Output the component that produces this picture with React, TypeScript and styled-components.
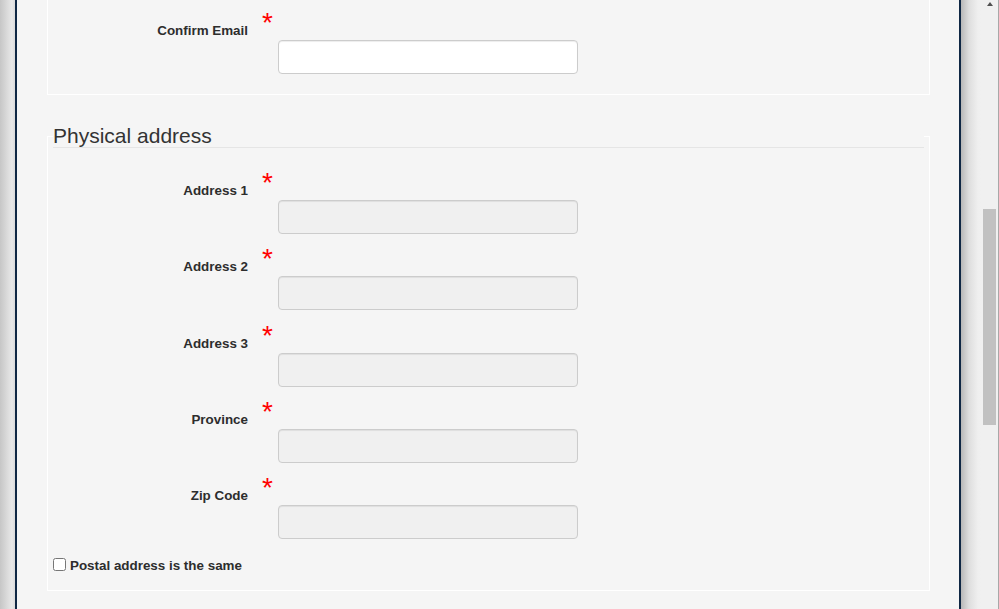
import React from "react";
import styled, { createGlobalStyle } from "styled-components";

const GlobalStyle = createGlobalStyle`
  html, body {
    margin: 0;
    padding: 0;
    height: 100%;
    overflow: hidden;
    background: #f0f0f0;
  }
  body {
    font-family: "Liberation Sans", Arial, Helvetica, sans-serif;
  }
`;

const Window = styled.div`
  display: flex;
  width: 999px;
  height: 609px;
  overflow: hidden;
`;

const ShadowLeft = styled.div`
  flex: 0 0 15px;
  background: linear-gradient(to right, #c6c6c6, #e8e8e8 80%, #dadada);
`;

const ShadowRight = styled.div`
  flex: 0 0 20px;
  background: linear-gradient(to right, #b8b8b8, #dedede 40%, #efefef 85%, #f0f0f0);
`;

const Edge = styled.div`
  flex: 0 0 2px;
  background: #0f2744;
`;

const Page = styled.main`
  flex: 0 0 942px;
  box-sizing: border-box;
  background: #f5f5f5;
  padding: 0 29px 0 30px;
  overflow: hidden;
`;

const Section = styled.fieldset<{ $cut?: boolean; $gap?: number }>`
  margin: ${(p) => (p.$gap ? `${p.$gap}px` : "0")} 0 0 0;
  min-width: 0;
  border: 1px solid #ffffff;
  border-top: ${(p) => (p.$cut ? "none" : "1px solid #ffffff")};
  padding: ${(p) => (p.$cut ? "9px 5px 8.75px" : "0 5px 15px")};
`;

const Legend = styled.legend`
  display: block;
  box-sizing: border-box;
  width: 100%;
  padding: 0;
  margin: 0 0 21px;
  font-size: 21px;
  line-height: 22px;
  color: #333333;
  border-bottom: 1px solid #e5e5e5;
`;

const Row = styled.div`
  display: grid;
  grid-template-columns: 195px 30px 300px;
  grid-template-rows: 31px 34px;
  margin-bottom: 11.25px;
`;

const Label = styled.label`
  grid-column: 1;
  grid-row: 1;
  text-align: right;
  padding-top: 12px;
  font-size: 13.4px;
  line-height: 19px;
  font-weight: 700;
  color: #2d2d2d;
`;

const Asterisk = styled.span`
  grid-column: 2;
  grid-row: 1;
  padding-left: 14px;
  color: #ff0000;
  font-size: 28px;
  line-height: 28px;
`;

const Input = styled.input<{ $locked?: boolean }>`
  grid-column: 3;
  grid-row: 2;
  box-sizing: border-box;
  width: 300px;
  height: 34px;
  margin: 0;
  padding: 6px 12px;
  font-family: inherit;
  font-size: 14px;
  color: #555555;
  background: ${(p) => (p.$locked ? "#f0f0f0" : "#ffffff")};
  border: 1px solid #cccccc;
  border-radius: 4px;
  box-shadow: inset 0 1px 1px rgba(0, 0, 0, 0.075);
  outline: none;
`;

const CheckRow = styled.label`
  display: flex;
  align-items: flex-start;
  gap: 4px;
  padding-top: 6px;
  font-size: 13.4px;
  line-height: 19px;
  font-weight: 700;
  color: #2d2d2d;
`;

const Check = styled.input`
  width: 13px;
  height: 13px;
  margin: 2px 0 0 0;
`;

const ScrollTrack = styled.div`
  flex: 0 0 17px;
  display: flex;
  flex-direction: column;
  align-items: center;
  background: #f0f0f0;
`;

const ArrowUp = styled.div`
  flex: 0 0 auto;
  margin-top: 2px;
  width: 0;
  height: 0;
  border-left: 3.5px solid transparent;
  border-right: 3.5px solid transparent;
  border-bottom: 4px solid #505050;
`;

const Thumb = styled.div`
  flex: 0 0 auto;
  width: 13px;
  background: #c1c1c1;
`;

const WindowEdge = styled.div`
  flex: 0 0 1px;
  background: #a8a8a8;
`;

const addressFields = ["Address 1", "Address 2", "Address 3", "Province", "Zip Code"];

function Field({ label, locked }: { label: string; locked?: boolean }) {
  const id = label.replace(/\s+/g, "-").toLowerCase();
  return (
    <Row>
      <Label htmlFor={id}>{label}</Label>
      <Asterisk>*</Asterisk>
      <Input id={id} type="text" $locked={locked} readOnly={locked} />
    </Row>
  );
}

export default function App() {
  const thumbTop = 203;
  const thumbHeight = 216;
  return (
    <>
      <GlobalStyle />
      <Window>
        <ShadowLeft />
        <Edge />
        <Page>
          <Section $cut>
            <Field label="Confirm Email" />
          </Section>
          <Section $gap={30}>
            <Legend>Physical address</Legend>
            {addressFields.map((f) => (
              <Field key={f} label={f} locked />
            ))}
            <CheckRow>
              <Check type="checkbox" />
              Postal address is the same
            </CheckRow>
          </Section>
        </Page>
        <Edge />
        <ShadowRight />
        <ScrollTrack>
          <ArrowUp />
          <Thumb style={{ marginTop: thumbTop, height: thumbHeight }} />
        </ScrollTrack>
        <WindowEdge />
      </Window>
    </>
  );
}
